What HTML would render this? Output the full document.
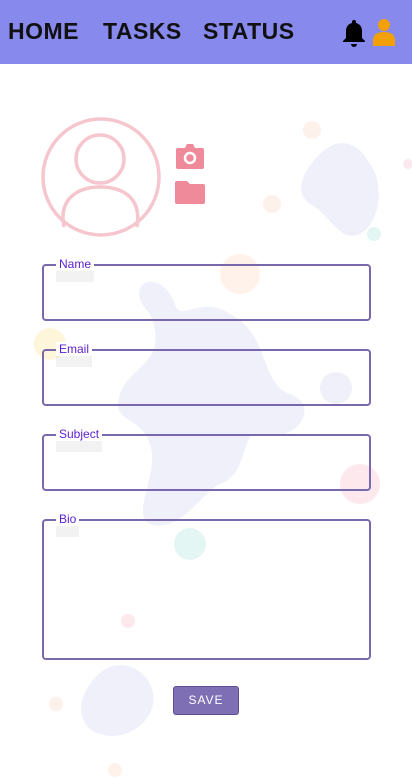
<!DOCTYPE html>
<html><head><style>
*{margin:0;padding:0;box-sizing:border-box}
body{width:412px;height:778px;background:#fff;position:relative;overflow:hidden;font-family:"Liberation Sans",sans-serif}
.hdr{position:absolute;left:0;top:0;width:412px;height:64px;background:#8789ec}
.nav{position:absolute;top:18px;font:bold 23px "Comic Sans MS","Liberation Sans",sans-serif;color:#111;letter-spacing:0.5px}
.f{position:absolute;left:42px;width:329px;border:2px solid #7a68ad;border-radius:4px}
.lab{position:absolute;left:12px;top:-9px;background:#fff;padding:0 3px;font-size:12px;color:#5a1fd0;line-height:14px}
.lab::after{content:"";position:absolute;left:0;top:12px;width:100%;height:13px;background:#f2f2f2;z-index:-1}
</style></head><body>
<svg style="position:absolute;left:0;top:64px" width="412" height="714">
<g fill="#f0f0fb">
<path d="M150 250 C120 220 160 200 175 240 C180 260 200 230 230 250 C270 270 260 320 290 330 C320 340 300 380 260 370 C240 365 250 410 220 420 C200 430 180 470 150 460 C130 450 160 410 150 380 C140 350 110 360 120 330 C130 300 170 300 150 250Z"/>
<circle cx="336" cy="324" r="16"/>
<path d="M320 90 C340 70 360 80 370 100 C385 120 380 160 360 170 C340 180 330 150 310 140 C295 130 300 110 320 90Z"/>
<path d="M90 620 C110 590 140 600 150 620 C165 650 130 680 100 670 C80 665 75 640 90 620Z"/>
</g>
<g fill="#fdece3" opacity=".7"><circle cx="240" cy="210" r="20"/><circle cx="272" cy="140" r="9"/><circle cx="312" cy="66" r="9"/><circle cx="56" cy="640" r="7"/><circle cx="115" cy="706" r="7"/></g>
<g fill="#fdeab0" opacity=".45"><circle cx="50" cy="280" r="16"/></g>
<g fill="#e4f6f4"><circle cx="190" cy="480" r="16"/><circle cx="374" cy="170" r="7"/></g>
<g fill="#fde8ee"><circle cx="360" cy="420" r="20"/><circle cx="128" cy="557" r="7"/><circle cx="408" cy="100" r="5"/></g>
</svg>
<div class="hdr"></div>
<div class="nav" style="left:8px">HOME</div>
<div class="nav" style="left:103px">TASKS</div>
<div class="nav" style="left:203px">STATUS</div>
<svg style="position:absolute;left:341px;top:18px" width="26" height="30" viewBox="0 0 26 30"><path d="M13 2a2 2 0 0 1 2 2v1c4 1 6 4 6 8v7l3 3v1H2v-1l3-3v-7c0-4 2-7 6-8V4a2 2 0 0 1 2-2z" fill="#000"/><path d="M10 26h6a3 3 0 0 1-6 0z" fill="#000"/></svg>
<svg style="position:absolute;left:372px;top:18px" width="24" height="28" viewBox="0 0 24 28"><circle cx="12" cy="7" r="6" fill="#f2a007"/><path d="M1 28v-6c0-5 4-8 11-8s11 3 11 8v6z" fill="#f2a007"/></svg>
<svg style="position:absolute;left:40px;top:117px" width="122" height="122" viewBox="0 0 122 122" fill="none" stroke="#f6c6cf" stroke-width="3.5"><circle cx="61" cy="60" r="58"/><circle cx="60" cy="42" r="24"/><path d="M24 110 C18 80 40 70 60 70 C82 70 102 80 97 110"/></svg>
<svg style="position:absolute;left:175px;top:143px" width="30" height="28" viewBox="0 0 30 28"><path d="M3 5h7l2-4h6l2 4h7a2 2 0 0 1 2 2v17a2 2 0 0 1-2 2H3a2 2 0 0 1-2-2V7a2 2 0 0 1 2-2z" fill="#ef8a9a"/><circle cx="15" cy="15" r="5" fill="none" stroke="#fff" stroke-width="2.5"/></svg>
<svg style="position:absolute;left:175px;top:180px" width="30" height="24" viewBox="0 0 30 24"><path d="M2 1h10l3 3h13a2 2 0 0 1 2 2v16a2 2 0 0 1-2 2H2a2 2 0 0 1-2-2V3a2 2 0 0 1 2-2z" fill="#ef8a9a"/></svg>
<div class="f" style="top:264px;height:57px"><span class="lab">Name</span></div>
<div class="f" style="top:349px;height:57px"><span class="lab">Email</span></div>
<div class="f" style="top:434px;height:57px"><span class="lab">Subject</span></div>
<div class="f" style="top:519px;height:141px"><span class="lab">Bio</span></div>
<div style="position:absolute;left:173px;top:686px;width:66px;height:29px;background:#7e6fb5;border:1px solid #5e4f95;border-radius:3px;color:#fff;font-size:12px;letter-spacing:1px;text-align:center;line-height:27px">SAVE</div>
</body></html>
